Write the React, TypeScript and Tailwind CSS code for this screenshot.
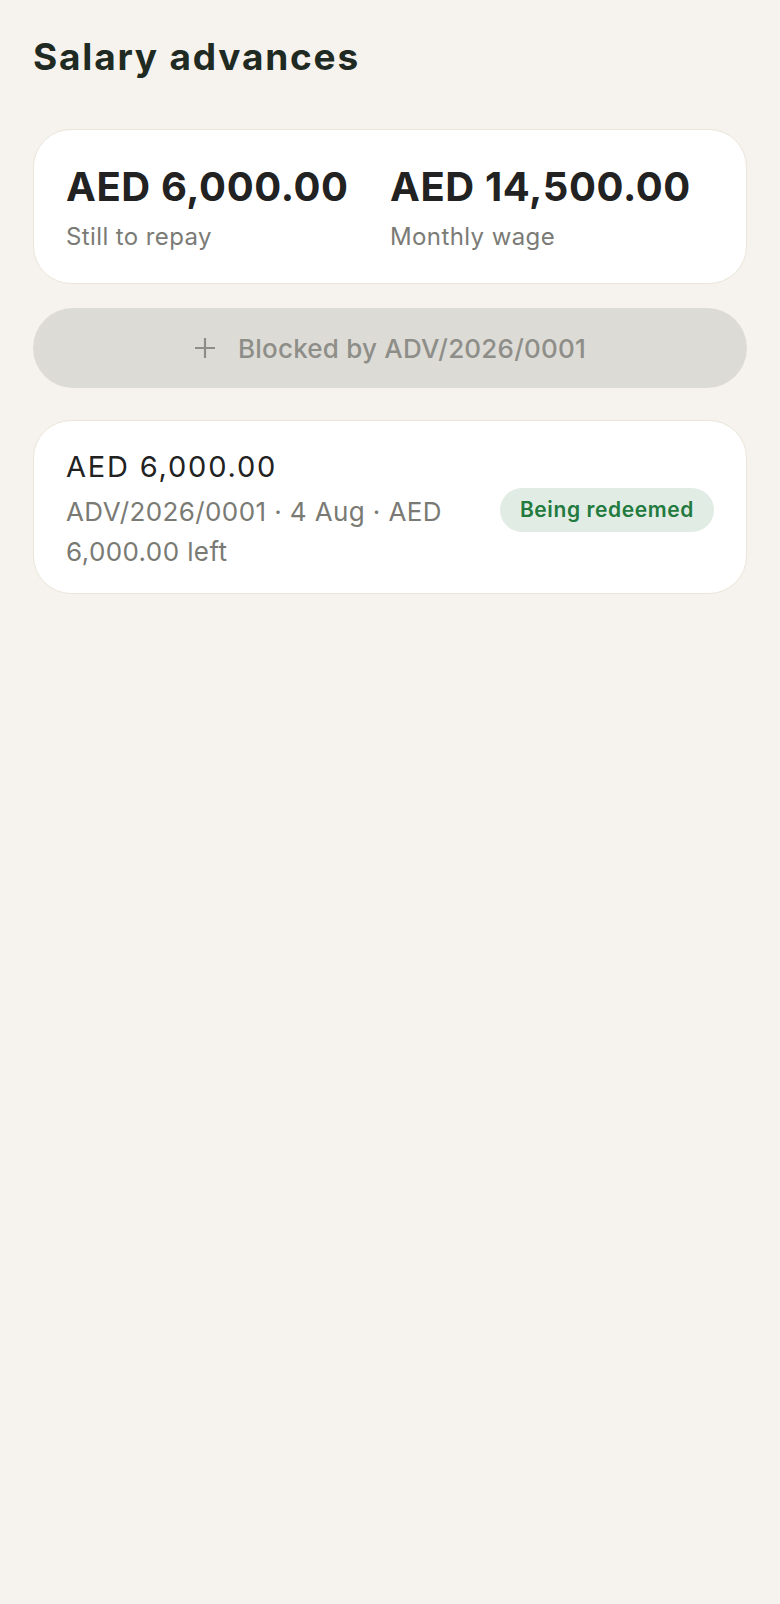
import React from "react";

const advances = [
  {
    id: "ADV/2026/0001",
    amount: "AED 6,000.00",
    date: "4 Aug",
    left: "AED 6,000.00",
    status: "Being redeemed"
  }
];

const Stat: React.FC<{ value: string; label: string }> = ({ value, label }) => (
  <div>
    <p className="text-[40px] font-bold leading-[48px] tracking-[0.6px] text-[#222222]">
      {value}
    </p>
    <p className="mt-[10px] text-[24px] leading-[32px] tracking-[0.4px] text-[#7b7b76]">
      {label}
    </p>
  </div>
);

export default function App() {
  return (
    <div
      className="min-h-screen bg-[#f6f3ee] px-[33px] pt-[36px]"
      style={{ fontFamily: "Inter, 'Noto Sans', sans-serif" }}
    >
      <h1 className="text-[37px] font-bold leading-[42px] tracking-[1.8px] text-[#1f2a22]">
        Salary advances
      </h1>

      {/* totals */}
      <div className="mt-[51px] grid grid-cols-2 rounded-[38px] border border-[#ece5d9] bg-white px-[32px] pt-[33px] pb-[30px]">
        <Stat value="AED 6,000.00" label="Still to repay" />
        <Stat value="AED 14,500.00" label="Monthly wage" />
      </div>

      <button
        disabled
        className="mt-[24px] flex h-[80px] w-full items-center justify-center gap-[22px] rounded-full bg-[#dddbd6] text-[#8e8e89]"
      >
        <svg width="22" height="22" viewBox="0 0 22 22" fill="none">
          <path d="M11 1v20M1 11h20" stroke="currentColor" strokeWidth="2.2" />
        </svg>
        <span className="text-[26px] font-medium tracking-[0.2px]">
          Blocked by ADV/2026/0001
        </span>
      </button>

      <div className="mt-[32px] flex flex-col gap-4">
        {advances.map(adv => (
          <div
            key={adv.id}
            className="flex items-center gap-4 rounded-[38px] border border-[#ece5d9] bg-white px-[32px] pt-[27px] pb-[21px]"
          >
            <div className="min-w-0 flex-1">
              <p className="text-[29px] leading-[38px] tracking-[1.8px] text-[#222222]">
                {adv.amount}
              </p>
              <p className="mt-[6px] text-[26px] leading-[40px] tracking-[0.4px] text-[#7a7a74]">
                {`${adv.id} · ${adv.date} · ${adv.left} left`}
              </p>
            </div>
            <span className="shrink-0 rounded-full bg-[#e1ede4] px-[20px] py-[8px] text-[21px] font-semibold leading-[28px] tracking-[0.6px] text-[#237a3e]">
              {adv.status}
            </span>
          </div>
        ))}
      </div>
    </div>
  );
}
